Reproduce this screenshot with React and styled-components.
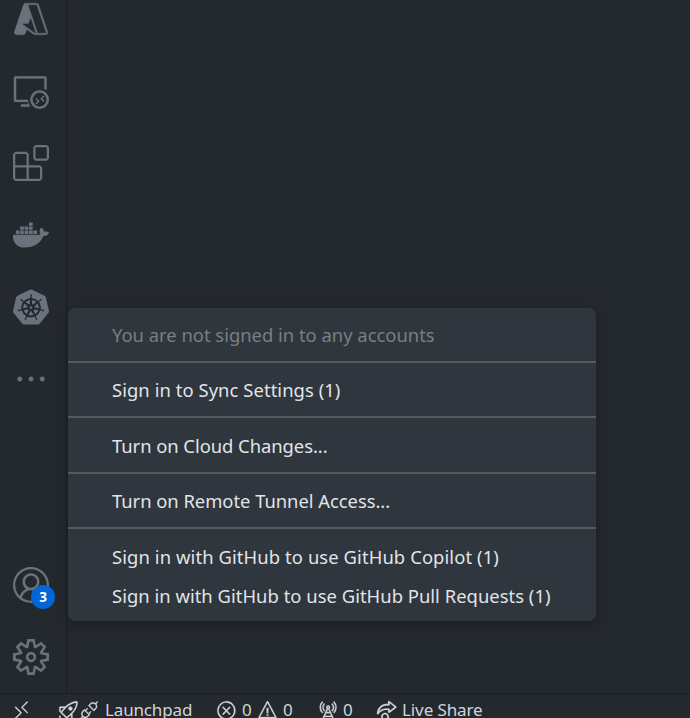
import React from 'react';
import styled, { createGlobalStyle } from 'styled-components';
import {
  VscAzure, VscRemoteExplorer, VscExtensions, VscEllipsis, VscAccount, VscSettingsGear,
  VscRemote, VscRocket, VscDebugDisconnect, VscError, VscWarning, VscRadioTower, VscLiveShare,
} from 'react-icons/vsc';
import { FaDocker } from 'react-icons/fa';
import { SiKubernetes } from 'react-icons/si';

const GlobalStyle = createGlobalStyle`
  * { box-sizing: border-box; }
  body {
    margin: 0;
    overflow: hidden;
    background: #24292e;
    font-family: "Noto Sans", "Open Sans", sans-serif;
  }
`;

const Window = styled.div`
  position: relative;
  display: grid;
  grid-template-rows: 693px 25px;
  width: 690px;
  height: 718px;
  overflow: hidden;
  background: #24292e;
`;

const ActivityBar = styled.nav`
  display: flex;
  flex-direction: column;
  justify-content: space-between;
  width: 67px;
  height: 693px;
  border-right: 1px solid #1b1f23;
  color: #6a737d;
`;

const ActivityGroup = styled.div`
  margin-top: ${(p) => (p.$clipped ? '-16.6px' : '0')};
`;

const Activity = styled.div`
  position: relative;
  display: flex;
  align-items: center;
  justify-content: center;
  width: 62.6px;
  height: 72px;
  svg {
    width: 36px;
    height: 36px;
    stroke-width: ${(p) => p.$stroke || 0};
  }
`;

const Badge = styled.span`
  position: absolute;
  left: 31px;
  top: 36px;
  width: 24px;
  height: 24px;
  border-radius: 50%;
  background: #0366d6;
  color: #fff;
  font-size: 13.5px;
  font-weight: 700;
  line-height: 24px;
  text-align: center;
`;

const StatusBar = styled.footer`
  display: flex;
  height: 25px;
  padding: 8px 0 0 11px;
  border-top: 1px solid #1b1f23;
  color: #d1d5da;
  font-size: 17px;
  line-height: 16px;
  white-space: nowrap;
`;

const StatusItem = styled.div`
  display: flex;
  align-items: center;
  height: 16px;
  width: ${(p) => p.$width}px;
  svg { flex: none; width: 21px; height: 21px; stroke-width: 0.2; }
`;

const StatusLabel = styled.span`
  width: ${(p) => p.$width}px;
  margin-left: 5px;
  letter-spacing: ${(p) => p.$spacing || 0}px;
`;

const Menu = styled.div`
  position: absolute;
  left: 67.5px;
  top: 308px;
  width: 528.5px;
  height: 312.5px;
  padding-top: 6.6px;
  border-radius: 7px;
  background: #2f363d;
  box-shadow: 0 3px 12px #1b1f23;
`;

const MenuItem = styled.div`
  height: 39px;
  padding-left: 44.5px;
  color: ${(p) => (p.$disabled ? '#7b7e82' : '#e1e4e8')};
  font-size: 18.4px;
  line-height: 39px;
  letter-spacing: ${(p) => p.$spacing || 0}px;
  white-space: nowrap;
`;

const Separator = styled.div`
  height: 2px;
  margin: 7px 0 7.5px;
  background: #58595b;
`;

export default function App() {
  return (
    <>
      <GlobalStyle />
      <Window>
        <ActivityBar>
          <ActivityGroup $clipped>
            <Activity $stroke={0.2}><VscAzure /></Activity>
            <Activity $stroke={0.1}><VscRemoteExplorer /></Activity>
            <Activity><VscExtensions /></Activity>
            <Activity><FaDocker /></Activity>
            <Activity><SiKubernetes /></Activity>
            <Activity $stroke={0.2}><VscEllipsis /></Activity>
          </ActivityGroup>
          <ActivityGroup>
            <Activity><VscAccount /><Badge>3</Badge></Activity>
            <Activity><VscSettingsGear /></Activity>
          </ActivityGroup>
        </ActivityBar>
        <StatusBar>
          <StatusItem $width={47}><VscRemote /></StatusItem>
          <StatusItem $width={158}>
            <VscRocket /><VscDebugDisconnect /><StatusLabel $spacing={-0.15}>Launchpad</StatusLabel>
          </StatusItem>
          <StatusItem $width={101}>
            <VscError /><StatusLabel $width={15}>0</StatusLabel>
            <VscWarning /><StatusLabel>0</StatusLabel>
          </StatusItem>
          <StatusItem $width={59}><VscRadioTower /><StatusLabel>0</StatusLabel></StatusItem>
          <StatusItem><VscLiveShare /><StatusLabel $spacing={-0.1}>Live Share</StatusLabel></StatusItem>
        </StatusBar>
        <Menu>
          <MenuItem $disabled>You are not signed in to any accounts</MenuItem>
          <Separator />
          <MenuItem $spacing={0.07}>Sign in to Sync Settings (1)</MenuItem>
          <Separator />
          <MenuItem $spacing={-0.04}>Turn on Cloud Changes...</MenuItem>
          <Separator />
          <MenuItem $spacing={-0.03}>Turn on Remote Tunnel Access...</MenuItem>
          <Separator />
          <MenuItem $spacing={0.1}>Sign in with GitHub to use GitHub Copilot (1)</MenuItem>
          <MenuItem $spacing={0.03}>Sign in with GitHub to use GitHub Pull Requests (1)</MenuItem>
        </Menu>
      </Window>
    </>
  );
}
